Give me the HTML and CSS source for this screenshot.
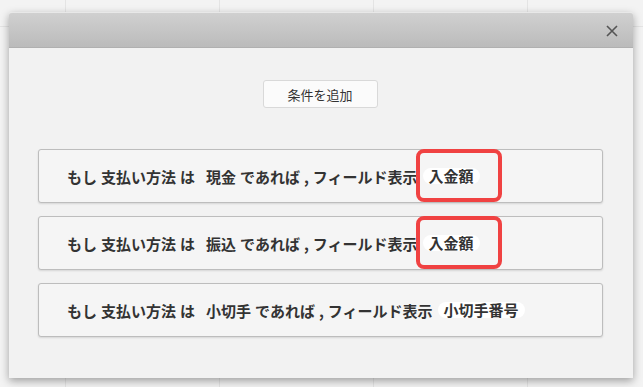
FILE: index.html
```html
<!DOCTYPE html>
<html lang="ja">
<head>
    <meta charset="UTF-8">
    <title>条件</title>
    <link rel="stylesheet" href="styles.css">
</head>
<body>

    <!-- ダイアログ -->
    <div class="dialog">
        <div class="dialog-header">
            <span class="close">
                <svg width="12" height="12" viewBox="0 0 12 12">
                    <path d="M1 1 L11 11 M11 1 L1 11" stroke="#555" stroke-width="1.6" fill="none"/>
                </svg>
            </span>
        </div>

        <div class="dialog-body">
            <div class="add-row">
                <button class="add-btn">条件を追加</button>
            </div>

            <div class="rule">
                <span class="word">もし</span>
                <span class="word">支払い方法</span>
                <span class="word">は</span>
                <span class="value">現金</span>
                <span class="word">であれば</span>
                <span class="word">,</span>
                <span class="word">フィールド表示</span>
                <span class="pill mark">入金額</span>
            </div>

            <div class="rule">
                <span class="word">もし</span>
                <span class="word">支払い方法</span>
                <span class="word">は</span>
                <span class="value">振込</span>
                <span class="word">であれば</span>
                <span class="word">,</span>
                <span class="word">フィールド表示</span>
                <span class="pill mark">入金額</span>
            </div>

            <div class="rule">
                <span class="word">もし</span>
                <span class="word">支払い方法</span>
                <span class="word">は</span>
                <span class="value">小切手</span>
                <span class="word">であれば</span>
                <span class="word">,</span>
                <span class="word">フィールド表示</span>
                <span class="pill">小切手番号</span>
            </div>
        </div>
    </div>

</body>
</html>
```

FILE: styles.css
```css
html, body {
    margin: 0;
    padding: 0;
}

body {
    width: 643px;
    height: 387px;
    overflow: hidden;
    background-color: #f3f3f3;
    /* 背景の薄い罫線 */
    background-image:
        linear-gradient(to right, #e4e4e4 1px, transparent 1px),
        linear-gradient(to bottom, #e4e4e4 1px, transparent 1px);
    background-size: 154px 100%, 100% 400px;
    background-position: 65px 0, 0 26px;
    font-family: "Noto Sans CJK JP", "Noto Sans", sans-serif;
    color: #333;
    padding: 12px 0 0 9px;
    box-sizing: border-box;
}

/* ダイアログ本体 */
.dialog {
    width: 624px;
    height: 366px;
    background: #f2f2f2;
    box-shadow: 0 3px 8px rgba(0, 0, 0, 0.35);
    border-radius: 3px 3px 0 0;
    display: flex;
    flex-direction: column;
}

.dialog-header {
    height: 36px;
    box-sizing: border-box;
    border-top: 1px solid #e8e8e8;
    border-bottom: 1px solid #b0b0b0;
    border-radius: 3px 3px 0 0;
    background: linear-gradient(to bottom, #d0d0d0, #bbbbbb);
    display: flex;
    justify-content: flex-end;
    align-items: center;
    padding: 2px 15px 0 0;
}

.close {
    display: flex;
    width: 12px;
    height: 12px;
}

.dialog-body {
    padding: 32px 30px 0 29px;
    display: flex;
    flex-direction: column;
    gap: 13px;
}

.add-row {
    display: flex;
    justify-content: center;
    margin-bottom: 28px;
}

.add-btn {
    width: 115px;
    height: 28px;
    background: #fbfbfb;
    border: 1px solid #d9d9d9;
    border-radius: 3px;
    font-family: "Noto Sans CJK JP", sans-serif;
    font-size: 13px;
    color: #333;
    padding: 0;
    margin-left: -1px;
}

/* 条件の行 */
.rule {
    height: 54px;
    box-sizing: border-box;
    background: #f5f5f5;
    border: 1px solid #bdbdbd;
    border-radius: 3px;
    box-shadow: 0 1px 2px rgba(0, 0, 0, 0.12);
    display: flex;
    align-items: center;
    padding: 0 0 0 28px;
    font-size: 15px;
    font-weight: 700;
    color: #333;
}

.word {
    margin-right: 4px;
}

.value {
    margin: 0 4px 0 7px;
}

.pill {
    background: #fff;
    border-radius: 8px;
    padding: 0 6px;
    line-height: 16px;
    margin-left: 1px;
}

/* 赤い枠の注釈 */
.mark {
    position: relative;
}

.mark::after {
    content: '';
    position: absolute;
    left: -7px;
    right: -22px;
    top: -19px;
    bottom: -18px;
    border: 4px solid #f04242;
    border-radius: 8px;
}
```
